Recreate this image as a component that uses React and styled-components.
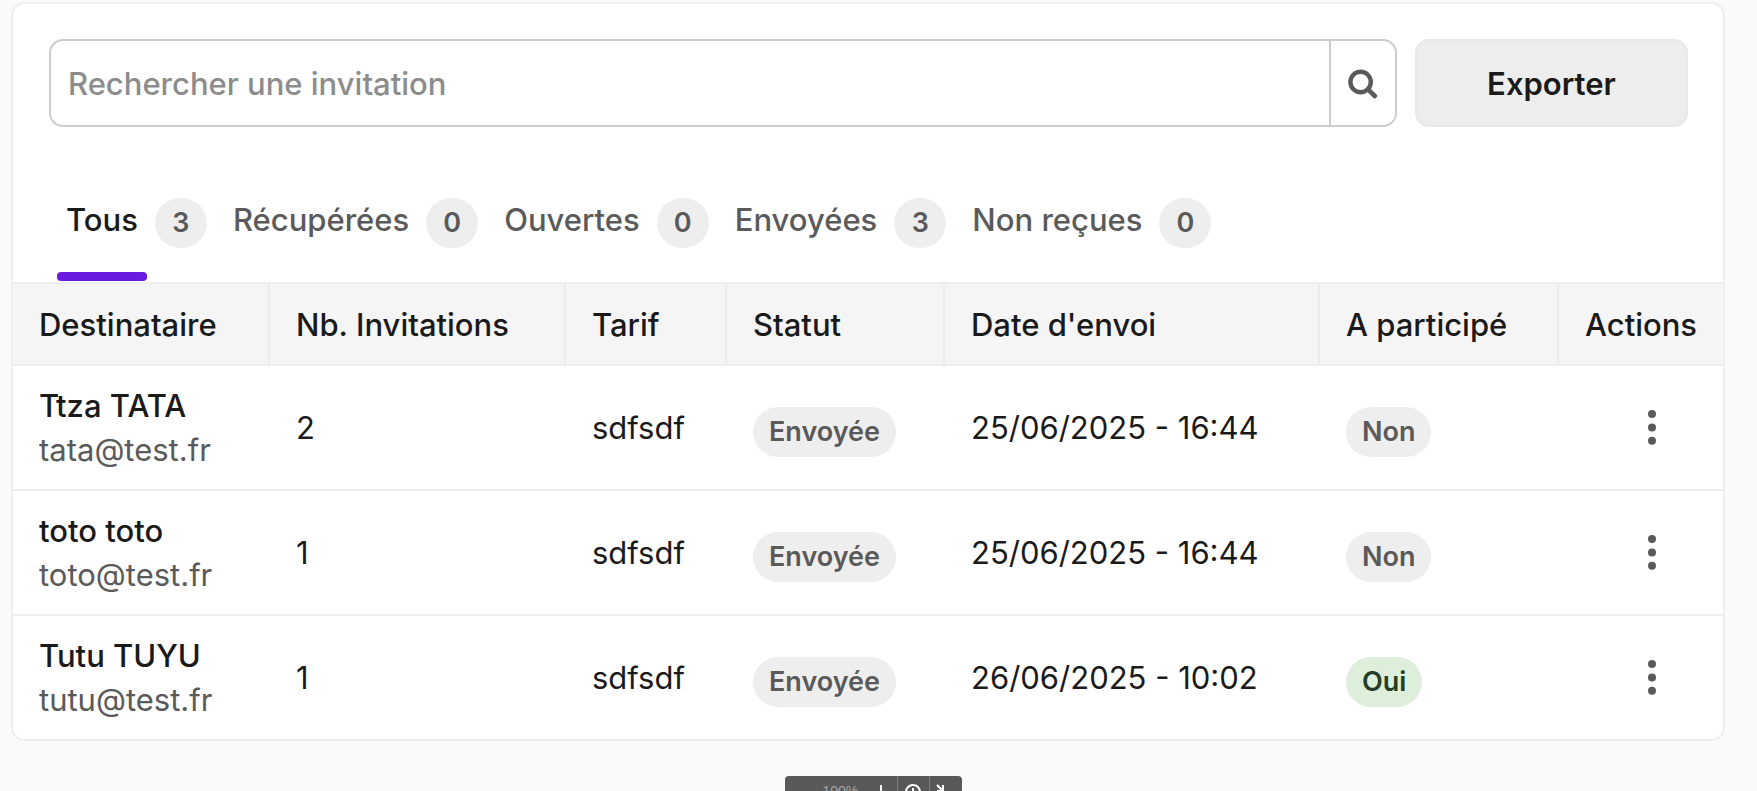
import { useState } from 'react';
import styled, { createGlobalStyle } from 'styled-components';

const GlobalStyle = createGlobalStyle`
  * {
    box-sizing: border-box;
  }

  body {
    margin: 0;
    background: #fafafa;
    color: #1a1a1a;
    font-family: Inter, 'Liberation Sans', sans-serif;
    font-size: 31px;
  }

  button,
  input {
    font-family: inherit;
    font-size: inherit;
    color: inherit;
  }
`;

const Card = styled.section`
  margin: 2px 32px 50px 11px;
  border: 2px solid #eeeeee;
  border-radius: 14px;
  background: #ffffff;
  overflow: hidden;
`;

const Toolbar = styled.div`
  display: flex;
  gap: 18px;
  padding: 35px 35px 35px 36px;
`;

const SearchForm = styled.form`
  display: flex;
  flex: 1;
  height: 88px;
  border: 2px solid #cccccc;
  border-radius: 14px;
  overflow: hidden;
`;

const SearchInput = styled.input`
  flex: 1;
  min-width: 0;
  padding: 0 17px;
  border: none;
  outline: none;
  background: none;
  font-weight: 500;

  &::placeholder {
    color: #8c8c8c;
    opacity: 1;
  }
`;

const SearchButton = styled.button`
  display: flex;
  align-items: center;
  justify-content: center;
  width: 66px;
  padding: 0;
  border: none;
  border-left: 2px solid #cccccc;
  background: none;
  color: #5a5a5a;
  cursor: pointer;
`;

const ExportButton = styled.button`
  width: 273px;
  border: 2px solid #e8e8e8;
  border-radius: 14px;
  background: #ededed;
  font-weight: 600;
  cursor: pointer;
`;

const TabList = styled.div`
  display: flex;
  gap: 17px;
  padding: 36px 44px 1px;
`;

const Tab = styled.button`
  display: flex;
  align-items: flex-start;
  gap: 8px;
  height: 83px;
  padding: 0;
  border: none;
  background: none;
  color: ${props => (props.$isActive ? '#1a1a1a' : '#5a5a5a')};
  font-weight: 500;
  line-height: 44px;
  cursor: pointer;
`;

const TabLabel = styled.span`
  display: flex;
  flex-direction: column;
  justify-content: space-between;
  height: 100%;
  padding: 0 9px;
`;

const TabMarker = styled.span`
  height: 9px;
  margin: 0 -9px;
  border-radius: 4px;
  background: #6b1be0;
`;

const Count = styled.span`
  min-width: 52px;
  border-radius: 25px;
  background: #eeeeee;
  color: #5a5a5a;
  font-size: 27px;
  font-weight: 600;
  line-height: 50px;
  text-align: center;
`;

const Table = styled.table`
  width: 100%;
  border-top: 2px solid #eeeeee;
  border-spacing: 0;
  table-layout: fixed;
`;

const HeaderCell = styled.th`
  width: ${props => (props.$width ? `${props.$width}px` : 'auto')};
  height: 82px;
  padding: 0 0 0 26px;
  border-bottom: 2px solid #eeeeee;
  background: #f5f5f5;
  font-weight: 500;
  text-align: left;
  white-space: nowrap;

  & + & {
    border-left: 2px solid #ececec;
  }
`;

const Cell = styled.td`
  height: 125px;
  padding: 0 0 0 ${props => (props.$isFirst ? '26px' : '28px')};
  border-bottom: 2px solid #eeeeee;
  white-space: nowrap;

  tr:last-child > & {
    height: 123px;
    border-bottom: none;
  }
`;

const GuestName = styled.div`
  font-weight: 500;
  line-height: 44px;
`;

const GuestEmail = styled.div`
  color: #5a5a5a;
  line-height: 44px;
`;

const Badge = styled.span`
  display: block;
  width: fit-content;
  margin-top: 8px;
  padding: 0 16px;
  border-radius: 25px;
  background: ${props => (props.$isPositive ? '#ddeedb' : '#eeeeee')};
  color: ${props => (props.$isPositive ? '#243d26' : '#5a5a5a')};
  font-size: 27px;
  font-weight: 600;
  line-height: 50px;
`;

const MenuButton = styled.button`
  display: flex;
  align-items: center;
  justify-content: center;
  width: 48px;
  height: 48px;
  margin-left: auto;
  margin-right: 47px;
  padding: 0;
  border: none;
  background: none;
  color: #5a5a5a;
  cursor: pointer;
`;

const ZoomBar = styled.div`
  position: fixed;
  bottom: -17px;
  left: 50%;
  display: flex;
  width: 177px;
  height: 32px;
  margin-left: -94px;
  border-radius: 4px;
  background: #595959;
  color: #ffffff;
  font-size: 14px;
`;

const ZoomValue = styled.span`
  width: 80px;
  padding-left: 38px;
  color: #a5a5a5;
  font-family: 'Liberation Sans', sans-serif;
  line-height: 30px;
`;

const ZoomButton = styled.button`
  display: flex;
  align-items: center;
  justify-content: center;
  width: 32px;
  padding: 0;
  border: none;
  border-left: ${props => (props.$hasDivider ? '1px solid #7a7a7a' : 'none')};
  background: none;
`;

const columns = [
  { label: 'Destinataire', width: 255 },
  { label: 'Nb. Invitations', width: 296 },
  { label: 'Tarif', width: 161 },
  { label: 'Statut', width: 218 },
  { label: "Date d'envoi" },
  { label: 'A participé', width: 239 },
  { label: 'Actions', width: 166 },
];

const tabs = [
  { label: 'Tous', count: 3 },
  { label: 'Récupérées', count: 0 },
  { label: 'Ouvertes', count: 0 },
  { label: 'Envoyées', count: 3 },
  { label: 'Non reçues', count: 0 },
];

const invitations = [
  { id: 1, name: 'Ttza TATA', email: 'tata@test.fr', quantity: 2, price: 'sdfsdf', status: 'Envoyée', sentAt: '25/06/2025 - 16:44', hasAttended: false },
  { id: 2, name: 'toto toto', email: 'toto@test.fr', quantity: 1, price: 'sdfsdf', status: 'Envoyée', sentAt: '25/06/2025 - 16:44', hasAttended: false },
  { id: 3, name: 'Tutu TUYU', email: 'tutu@test.fr', quantity: 1, price: 'sdfsdf', status: 'Envoyée', sentAt: '26/06/2025 - 10:02', hasAttended: true },
];

function SearchIcon() {
  return (
    <svg width="30" height="32" viewBox="0 0 30 32" fill="none" stroke="currentColor" strokeWidth="4.4">
      <circle cx="12.6" cy="15" r="10.2" />
      <path d="M20 22.4l6.8 6.6" strokeWidth="4.6" strokeLinecap="round" />
    </svg>
  );
}

function DotsIcon() {
  return (
    <svg width="10" height="38" viewBox="0 0 10 38" fill="currentColor">
      <circle cx="5" cy="5" r="4" />
      <circle cx="5" cy="18.4" r="4" />
      <circle cx="5" cy="31.8" r="4" />
    </svg>
  );
}

function InvitationRow({ invitation }) {
  return (
    <tr>
      <Cell $isFirst>
        <GuestName>{invitation.name}</GuestName>
        <GuestEmail>{invitation.email}</GuestEmail>
      </Cell>
      <Cell>{invitation.quantity}</Cell>
      <Cell>{invitation.price}</Cell>
      <Cell>
        <Badge>{invitation.status}</Badge>
      </Cell>
      <Cell>{invitation.sentAt}</Cell>
      <Cell>
        <Badge $isPositive={invitation.hasAttended}>
          {invitation.hasAttended ? 'Oui' : 'Non'}
        </Badge>
      </Cell>
      <Cell>
        <MenuButton type="button" aria-label="Actions">
          <DotsIcon />
        </MenuButton>
      </Cell>
    </tr>
  );
}

function App() {
  const [activeTab, setActiveTab] = useState('Tous');

  const handleSearchSubmit = e => {
    e.preventDefault();
  };

  return (
    <>
      <GlobalStyle />
      <Card>
        <Toolbar>
          <SearchForm onSubmit={handleSearchSubmit}>
            <SearchInput
              type="text"
              aria-label="Rechercher une invitation"
              placeholder="Rechercher une invitation"
            />
            <SearchButton type="submit" aria-label="Rechercher">
              <SearchIcon />
            </SearchButton>
          </SearchForm>
          <ExportButton type="button">Exporter</ExportButton>
        </Toolbar>
        <TabList role="tablist">
          {tabs.map(tab => (
            <Tab
              key={tab.label}
              type="button"
              role="tab"
              aria-selected={tab.label === activeTab}
              $isActive={tab.label === activeTab}
              onClick={() => setActiveTab(tab.label)}
            >
              <TabLabel>
                {tab.label}
                {tab.label === activeTab && <TabMarker />}
              </TabLabel>
              <Count>{tab.count}</Count>
            </Tab>
          ))}
        </TabList>
        <Table>
          <thead>
            <tr>
              {columns.map(column => (
                <HeaderCell key={column.label} scope="col" $width={column.width}>
                  {column.label}
                </HeaderCell>
              ))}
            </tr>
          </thead>
          <tbody>
            {invitations.map(invitation => (
              <InvitationRow key={invitation.id} invitation={invitation} />
            ))}
          </tbody>
        </Table>
      </Card>
      <ZoomBar>
        <ZoomValue>100%</ZoomValue>
        <ZoomButton type="button" aria-label="Agrandir">
          <svg width="14" height="14" viewBox="0 0 14 14" stroke="currentColor" strokeWidth="2">
            <path d="M7 0v14M0 7h14" />
          </svg>
        </ZoomButton>
        <ZoomButton type="button" aria-label="Taille réelle" $hasDivider>
          <svg width="16" height="16" viewBox="0 0 16 16" fill="none" stroke="currentColor" strokeWidth="2">
            <circle cx="8" cy="8" r="7" />
            <path d="M8 4v8M4 8h8" />
          </svg>
        </ZoomButton>
        <ZoomButton type="button" aria-label="Réduire" $hasDivider>
          <svg width="18" height="16" viewBox="0 0 18 16" fill="none" stroke="currentColor" strokeWidth="2">
            <path d="M1 1l6 6M7 1v6H1M17 15l-6-6M11 15V9h6" />
          </svg>
        </ZoomButton>
      </ZoomBar>
    </>
  );
}

export default App;
